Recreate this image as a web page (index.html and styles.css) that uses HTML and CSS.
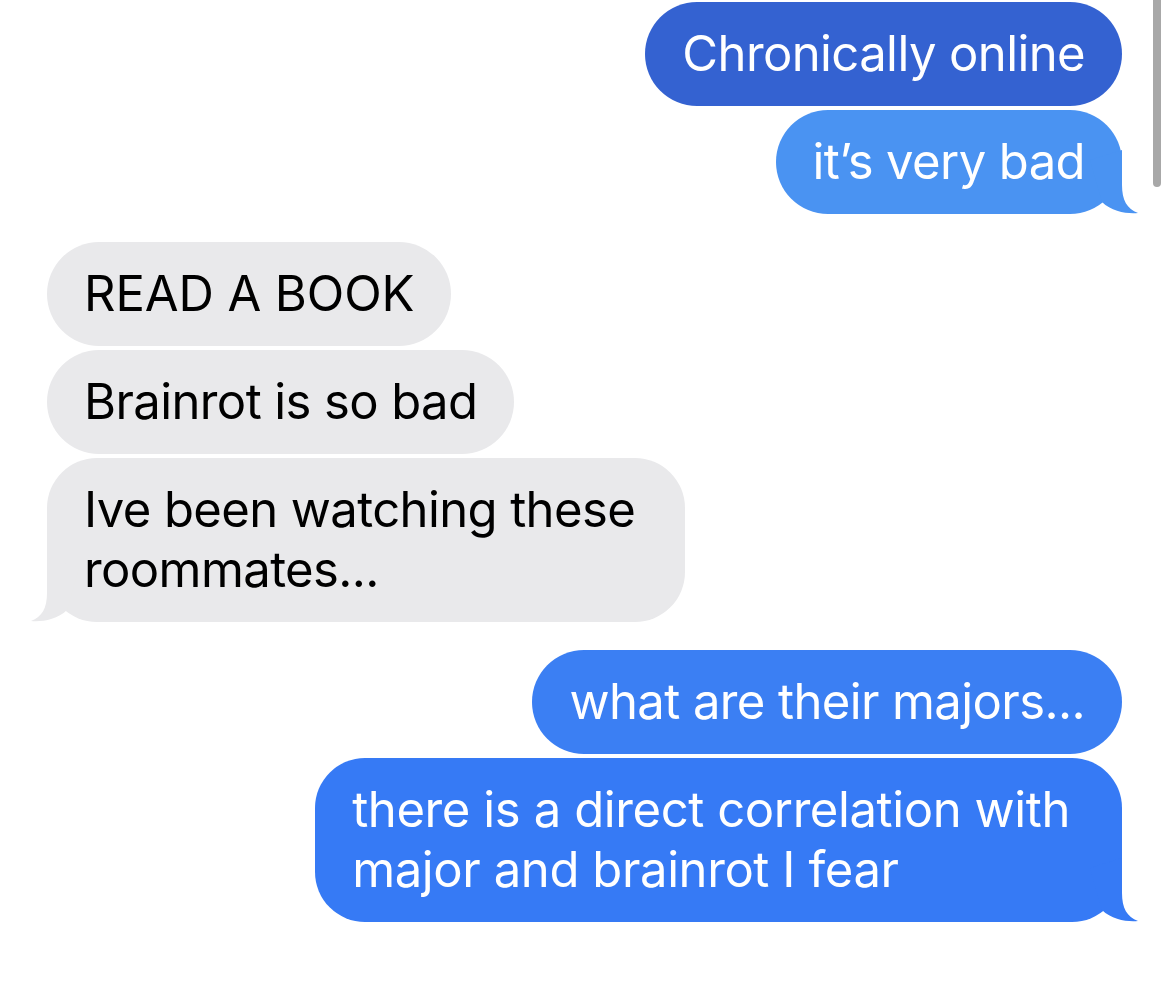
FILE: index.html
```html
<!DOCTYPE html>
<html lang="en">
<head>
<meta charset="utf-8">
<title>Messages</title>
<link rel="stylesheet" href="styles.css">
</head>
<body>
<div class="thread">
  <div class="group group-sent">
    <div class="bubble sent dark">Chronically online</div>
    <div class="bubble sent light has-tail">it’s very bad<svg class="tail tail-right" viewBox="0 0 56 64" width="56" height="64"><path d="M40,0 L40,35 C40,50 45,59 56,63 C46,64 30,62 20,52 L8,10 Z"/></svg></div>
  </div>
  <div class="group group-recv">
    <div class="bubble recv caps">READ A BOOK</div>
    <div class="bubble recv">Brainrot is so bad</div>
    <div class="bubble recv multi has-tail">Ive been watching these<br>roommates...<svg class="tail tail-left" viewBox="0 0 56 64" width="56" height="64"><path d="M40,0 L40,35 C40,50 45,59 56,63 C46,64 30,62 20,52 L8,10 Z"/></svg></div>
  </div>
  <div class="group group-sent">
    <div class="bubble sent mid">what are their majors...</div>
    <div class="bubble sent bright multi wide has-tail">there is a direct correlation with<br>major and brainrot I fear<svg class="tail tail-right" viewBox="0 0 56 64" width="56" height="64"><path d="M40,0 L40,35 C40,50 45,59 56,63 C46,64 30,62 20,52 L8,10 Z"/></svg></div>
  </div>
</div>
<div class="scrollbar"></div>
</body>
</html>
```
FILE: styles.css
```css
html, body {
  margin: 0;
  padding: 0;
  background: #ffffff;
}

body {
  font-family: "Inter", "Liberation Sans", sans-serif;
  -webkit-font-smoothing: antialiased;
}

.thread {
  display: flex;
  flex-direction: column;
  gap: 28px;
  padding: 2px 48px 0 47px;
}

.group {
  display: flex;
  flex-direction: column;
  gap: 4px;
}

.group-sent {
  align-items: flex-end;
}

.group-recv {
  align-items: flex-start;
}

.bubble {
  position: relative;
  padding: 22px 37px 22px 37px;
  font-size: 49px;
  line-height: 60px;
  border-radius: 52px;
  letter-spacing: -0.6px;
  white-space: nowrap;
}

.bubble.caps {
  letter-spacing: -0.1px;
}

.bubble.multi {
  padding-right: 50px;
  border-radius: 50px;
}

.bubble.wide {
  letter-spacing: -0.4px;
  padding-right: 52px;
}

.sent {
  color: #ffffff;
}

.dark { background: #3462d1; }
.light { background: #4a93f2; }
.mid { background: #3b7ff3; }
.bright { background: #367af5; }

.recv {
  background: #e9e9eb;
  color: #000000;
}

.tail {
  position: absolute;
  bottom: 0;
}

.tail-right {
  right: -16px;
}

.tail-left {
  left: -16px;
  transform: scaleX(-1);
}

.light .tail { fill: #4a93f2; }
.bright .tail { fill: #367af5; }
.recv .tail { fill: #e9e9eb; }

.scrollbar {
  position: fixed;
  top: -6px;
  right: 9px;
  width: 8px;
  height: 193px;
  border-radius: 4px;
  background: #a8a8a8;
}
```
